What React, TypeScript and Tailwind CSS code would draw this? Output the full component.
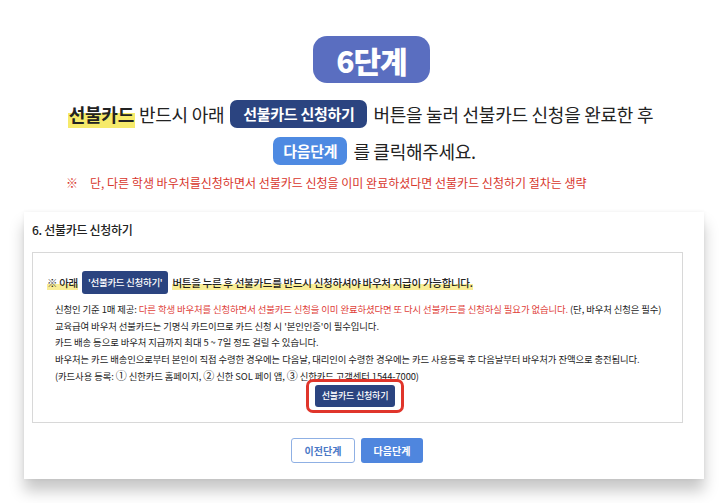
export default function App() {
  return (
    <div className="h-[503px] w-[721px] overflow-hidden bg-white font-['Noto_Sans_CJK_KR',sans-serif] text-[#222]">
      <div className="flex justify-center pl-[22px] pt-[36px]">
        <div className="flex h-[47px] w-[117px] items-center justify-center rounded-[14px] bg-[#5a6ec0] text-[30px] font-black leading-none tracking-[-1px] text-white">
          6단계
        </div>
      </div>

      <div className="mt-[17px] flex items-center justify-center text-[18px] leading-[28px] tracking-[-0.25px]">
        <span className="bg-[linear-gradient(transparent_45%,#f6ea6a_45%)] px-[1px] font-bold">선불카드</span>
        <span className="ml-[4px]">반드시 아래</span>
        <span className="mx-[6px] flex h-[28px] items-center rounded-[7px] bg-[#2b4480] px-[13px] text-[15px] font-bold tracking-[-0.3px] text-white">
          선불카드 신청하기
        </span>
        <span>버튼을 눌러 선불카드 신청을 완료한 후</span>
      </div>

      <div className="mt-[9px] flex items-center justify-center pl-[28px] text-[18px] tracking-[-0.3px]">
        <span className="mr-[6px] flex h-[28px] items-center rounded-[7px] bg-[#4e8ae2] px-[10px] text-[15px] font-bold tracking-[-0.3px] text-white">
          다음단계
        </span>
        <span>를 클릭해주세요.</span>
      </div>

      <p className="mt-[10px] pl-[66px] text-[12px] leading-[16px] text-[#d8362c]">
        <span className="mr-[12px]">※</span>단, 다른 학생 바우처를신청하면서 선불카드 신청을 이미 완료하셨다면 선불카드 신청하기 절차는 생략
      </p>

      <div className="mx-[24px] mt-[21px] w-[680px] bg-white px-[8px] pb-[16px] pt-[9px] shadow-[0_0_4px_rgba(0,0,0,0.06),0_12px_14px_rgba(0,0,0,0.22)]">
        <h2 className="text-[12px] font-medium leading-[17px] tracking-[-0.3px]">6. 선불카드 신청하기</h2>

        <div className="mt-[14px] w-[651px] border border-[#d8d8d8] pb-[9px] pt-[18px]">
          <div className="flex items-center pl-[14px] text-[10.5px] tracking-[-0.3px]">
            <span className="bg-[linear-gradient(transparent_60%,#f9ed96_60%)] font-medium">※ 아래</span>
            <span className="mx-[4px] flex h-[23px] items-center rounded-[3px] bg-[#2b4480] px-[6px] text-[9.5px] font-medium text-white">
              '선불카드 신청하기'
            </span>
            <span className="bg-[linear-gradient(transparent_60%,#f9ed96_60%)] font-medium">
              버튼을 누른 후 선불카드를 반드시 신청하셔야 바우처 지급이 가능합니다.
            </span>
          </div>

          <div className="mt-[7px] pl-[22px] text-[9.4px] leading-[16.5px] tracking-[-0.1px]">
            <p>
              신청인 기준 1매 제공:{' '}
              <span className="text-[#e0413a]">
                다른 학생 바우처를 신청하면서 선불카드 신청을 이미 완료하셨다면 또 다시 선불카드를 신청하실 필요가 없습니다.
              </span>{' '}
              (단, 바우처 신청은 필수)
            </p>
            <p>교육급여 바우처 선불카드는 기명식 카드이므로 카드 신청 시 '본인인증'이 필수입니다.</p>
            <p>카드 배송 등으로 바우처 지급까지 최대 5 ~ 7일 정도 걸릴 수 있습니다.</p>
            <p>
              바우처는 카드 배송인으로부터 본인이 직접 수령한 경우에는 다음날, 대리인이 수령한 경우에는 카드 사용등록 후 다음날부터 바우처가 잔액으로 충전됩니다.
            </p>
            <p>
              (카드사용 등록: <span className="text-[11px]">①</span> 신한카드 홈페이지, <span className="text-[11px]">②</span> 신한 SOL 페이 앱,{' '}
              <span className="text-[11px]">③</span> 신한카드 고객센터 1544-7000)
            </p>
          </div>

          <div className="-mt-[6px] flex justify-center pr-[5px]">
            <div className="rounded-[7px] border-[3px] border-[#e0352b] px-[6px] py-[3px]">
              <div className="flex h-[22px] items-center rounded-[3px] bg-[#2b4480] px-[7px] text-[9px] font-medium tracking-[-0.2px] text-white">
                선불카드 신청하기
              </div>
            </div>
          </div>
        </div>

        <div className="mt-[15px] flex justify-center gap-[6px] pr-[14px]">
          <button
            type="button"
            className="flex h-[25px] w-[64px] items-center justify-center rounded-[3px] border border-[#8fb0e4] bg-white text-[10px] font-bold text-[#4a78c6]"
          >
            이전단계
          </button>
          <button
            type="button"
            className="flex h-[25px] w-[62px] items-center justify-center rounded-[3px] bg-[#4f86de] text-[10px] font-bold text-white"
          >
            다음단계
          </button>
        </div>
      </div>
    </div>
  );
}
